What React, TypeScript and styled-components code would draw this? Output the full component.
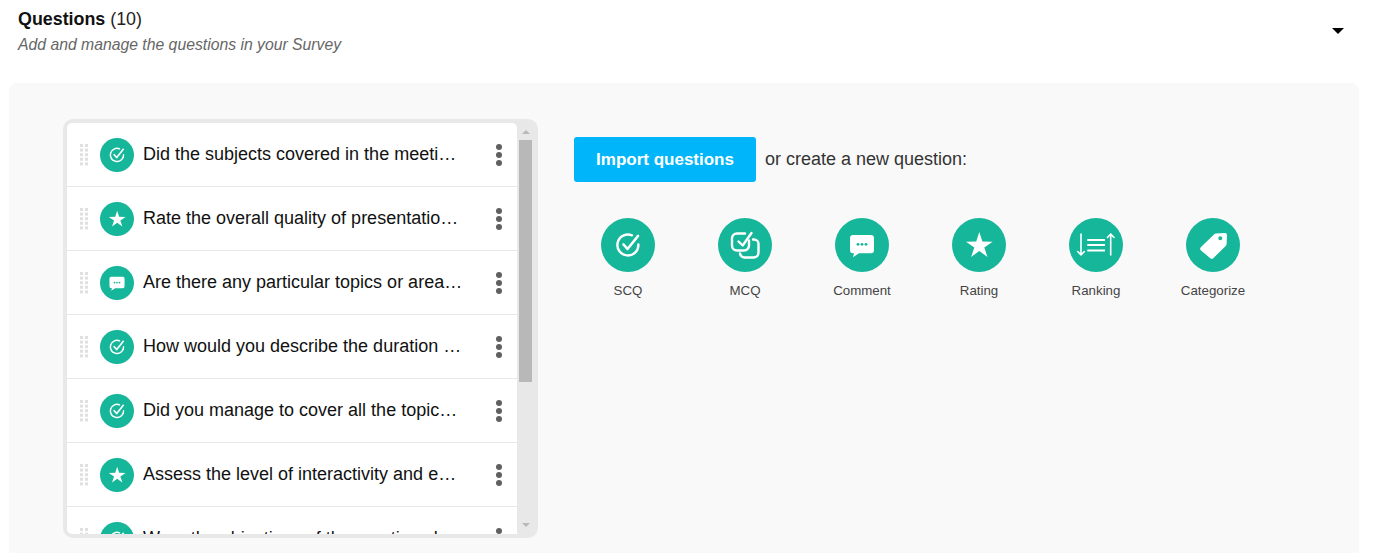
import { styled, createGlobalStyle } from 'styled-components';

type QuestionType = 'scq' | 'mcq' | 'comment' | 'rating' | 'ranking' | 'categorize';

const questions: { type: QuestionType; text: string }[] = [
  { type: 'scq', text: 'Did the subjects covered in the meeting meet your expectations?' },
  { type: 'rating', text: 'Rate the overall quality of presentations given in the meeting' },
  { type: 'comment', text: 'Are there any particular topics or areas you would like to cover next?' },
  { type: 'scq', text: 'How would you describe the duration of the meeting overall?' },
  { type: 'scq', text: 'Did you manage to cover all the topics on the agenda?' },
  { type: 'rating', text: 'Assess the level of interactivity and engagement in the meeting' },
  { type: 'scq', text: 'Were the objectives of the meeting clearly communicated?' },
];

const creators: { type: QuestionType; label: string }[] = [
  { type: 'scq', label: 'SCQ' },
  { type: 'mcq', label: 'MCQ' },
  { type: 'comment', label: 'Comment' },
  { type: 'rating', label: 'Rating' },
  { type: 'ranking', label: 'Ranking' },
  { type: 'categorize', label: 'Categorize' },
];

function TypeGlyph({ type }: { type: QuestionType }) {
  const stroke = { fill: 'none', stroke: '#fff', strokeLinecap: 'round', strokeLinejoin: 'round' } as const;
  switch (type) {
    case 'scq':
      return (
        <>
          <path d="M37.400 26.500A10.500 10.500 0 1 1 31 17.300" {...stroke} strokeWidth={2.400} />
          <path d="M22.500 26.500l4 4.500L37 18" {...stroke} strokeWidth={2.600} />
        </>
      );
    case 'mcq':
      return (
        <>
          <path d="M27 15.500h-8a5 5 0 0 0-5 5v7a5 5 0 0 0 5 5h7a5 5 0 0 0 5-5v-5" {...stroke} strokeWidth={2.400} />
          <path d="M20.500 23.500l4.200 4 8.800-12.500" {...stroke} strokeWidth={2.400} />
          <path d="M35 21.500h1a4.500 4.500 0 0 1 4.500 4.500v8.500a5 5 0 0 1-5 5h-9a5 5 0 0 1-4.500-4" {...stroke} strokeWidth={2.400} />
        </>
      );
    case 'comment':
      return (
        <>
          <path d="M18 17h18a3 3 0 0 1 3 3v12.300a3 3 0 0 1-3 3H24l-6 4 1-4h-1a3 3 0 0 1-3-3V20a3 3 0 0 1 3-3z" fill="#fff" />
          <circle cx="23" cy="26.300" r="1.400" fill="#15b69a" />
          <circle cx="27" cy="26.300" r="1.400" fill="#15b69a" />
          <circle cx="31" cy="26.300" r="1.400" fill="#15b69a" />
        </>
      );
    case 'rating':
      return <path d="M27.300 14l3.100 9.500 10.200.2-8.300 5.700 3.200 9.600-8.200-5.900-8.200 5.900 3.200-9.600L14 23.700l10.200-.2z" fill="#fff" />;
    case 'ranking':
      return (
        <>
          <path d="M12 16v21M8.700 33.500l3.300 3.500 3.300-3.500" {...stroke} strokeWidth={1.600} />
          <path d="M41.700 37V16M38.400 19.500l3.300-3.500 3.300 3.500" {...stroke} strokeWidth={1.600} />
          <path d="M18.300 22h17.700M18.300 27h17.700M18.300 32.500h17.700" fill="none" stroke="#fff" strokeWidth={2} />
        </>
      );
    case 'categorize':
      return (
        <path
          fillRule="evenodd"
          fill="#fff"
          d="M28 16.500a3 3 0 0 1 2-.9l8.300-.6a2.500 2.500 0 0 1 2.700 2.700l-.4 8.300a3 3 0 0 1-.9 2L27.500 40a2.500 2.500 0 0 1-3.500 0l-9-7.500a2.500 2.500 0 0 1 0-3.500zM34.300 18.300a2 2 0 1 0 0 4 2 2 0 0 0 0-4z"
        />
      );
  }
}

function TypeIcon({ type, size }: { type: QuestionType; size: number }) {
  return (
    <svg width={size} height={size} viewBox="0 0 54 54">
      <circle cx="27" cy="27" r="27" fill="#15b69a" />
      <TypeGlyph type={type} />
    </svg>
  );
}

function DragHandle() {
  const rows = [0, 1, 2, 3, 4];
  return (
    <svg width="8" height="22" viewBox="0 0 8 22">
      {rows.map(row => (
        <g key={row} fill="#e0e0e0">
          <rect x="0" y={row * 4.600} width="3" height="3" />
          <rect x="5" y={row * 4.600} width="3" height="3" />
        </g>
      ))}
    </svg>
  );
}

export default function App() {
  return (
    <Page>
      <GlobalStyle />
      <Header>
        <div>
          <Title>
            <strong>Questions</strong> (10)
          </Title>
          <Subtitle>Add and manage the questions in your Survey</Subtitle>
        </div>
        <Caret />
      </Header>
      <Panel>
        <ListFrame>
          <List>
            {questions.map((question, index) => (
              <Row key={index}>
                <Handle>
                  <DragHandle />
                </Handle>
                <Badge>
                  <TypeIcon type={question.type} size={34} />
                </Badge>
                <QuestionText>{question.text}</QuestionText>
                <Kebab>
                  <i />
                  <i />
                  <i />
                </Kebab>
              </Row>
            ))}
          </List>
          <ScrollBar>
            <ScrollArrow $up />
            <ScrollThumb />
            <ScrollArrow />
          </ScrollBar>
        </ListFrame>
        <Creator>
          <ImportRow>
            <ImportButton>Import questions</ImportButton>
            <ImportHint>or create a new question:</ImportHint>
          </ImportRow>
          <TypeGrid>
            {creators.map(creator => (
              <TypeItem key={creator.label}>
                <TypeIcon type={creator.type} size={54} />
                <TypeLabel>{creator.label}</TypeLabel>
              </TypeItem>
            ))}
          </TypeGrid>
        </Creator>
      </Panel>
    </Page>
  );
}

const GlobalStyle = createGlobalStyle`
  html, body {
    margin: 0;
    background: #fff;
    overflow: hidden;
  }

  body {
    font-family: "Liberation Sans", Arial, sans-serif;
  }
`;

const Page = styled.div`
  width: 1375px;
  height: 553px;
  overflow: hidden;
`;

const Header = styled.div`
  height: 83px;
  box-sizing: border-box;
  display: flex;
  justify-content: space-between;
  padding: 9px 31px 0 18px;
`;

const Title = styled.div`
  font-size: 17.850px;
  line-height: 20px;
  color: #222;

  & strong {
    color: #111;
  }
`;

const Subtitle = styled.div`
  margin-top: 6px;
  font-size: 15.750px;
  line-height: 20px;
  font-style: italic;
  color: #666;
`;

const Caret = styled.div`
  width: 0;
  height: 0;
  margin-top: 19px;
  border-left: 6px solid transparent;
  border-right: 6px solid transparent;
  border-top: 6px solid #000;
`;

const Panel = styled.div`
  width: 1350px;
  height: 490px;
  margin-left: 9px;
  box-sizing: border-box;
  padding: 36px 0 0 54px;
  display: flex;
  align-items: flex-start;
  gap: 36px;
  background: #f9f9f9;
  border-radius: 8px;
`;

const ListFrame = styled.div`
  width: 475px;
  height: 419px;
  box-sizing: border-box;
  padding: 4px;
  display: flex;
  border-radius: 10px;
  background: #e8e8e8;
`;

const List = styled.div`
  width: 450px;
  height: 411px;
  overflow: hidden;
  background: #fff;
  border-radius: 5px 5px 0 5px;
`;

const ScrollBar = styled.div`
  width: 17px;
  display: flex;
  flex-direction: column;
  align-items: center;
`;

const ScrollThumb = styled.div`
  width: 13px;
  height: 242px;
  background: #b8b8b8;
`;

const ScrollArrow = styled.div<{ $up?: boolean }>`
  width: 0;
  height: 0;
  border-left: 4px solid transparent;
  border-right: 4px solid transparent;
  ${({ $up }) =>
    $up
      ? `
    margin: 7px 0 6px;
    border-bottom: 4px solid #b8b8b8;
  `
      : `
    margin-top: auto;
    margin-bottom: 7px;
    border-top: 4px solid #b8b8b8;
  `}
`;

const Row = styled.div`
  height: 64px;
  box-sizing: border-box;
  padding: 1px 15px 0 13px;
  display: flex;
  align-items: center;
  border-bottom: 1px solid #e8e8e8;
`;

const Handle = styled.div`
  display: flex;
  margin-right: 12px;
`;

const Badge = styled.div`
  display: flex;
  margin-right: 9px;
`;

const QuestionText = styled.div`
  width: 320px;
  margin-top: -2px;
  font-size: 18px;
  line-height: 24px;
  color: #111;
  white-space: nowrap;
  overflow: hidden;
  text-overflow: ellipsis;
`;

const Kebab = styled.div`
  margin-left: auto;
  display: flex;
  flex-direction: column;
  gap: 2.400px;

  & > i {
    display: block;
    width: 6px;
    height: 6px;
    border-radius: 50%;
    background: #606060;
  }
`;

const Creator = styled.div`
  padding-top: 18px;
`;

const ImportRow = styled.div`
  display: flex;
  align-items: center;
  gap: 9px;
`;

const ImportButton = styled.button`
  width: 182px;
  height: 45px;
  padding: 0;
  border: 0;
  border-radius: 3px;
  background: #00b5f9;
  color: #fff;
  font-family: inherit;
  font-size: 17px;
  font-weight: 700;
`;

const ImportHint = styled.span`
  font-size: 18px;
  color: #333;
`;

const TypeGrid = styled.div`
  margin-top: 36px;
  display: flex;
  gap: 9px;
`;

const TypeItem = styled.div`
  width: 108px;
  display: flex;
  flex-direction: column;
  align-items: center;
  gap: 11px;
`;

const TypeLabel = styled.div`
  font-size: 13.300px;
  line-height: 16px;
  color: #444;
`;
